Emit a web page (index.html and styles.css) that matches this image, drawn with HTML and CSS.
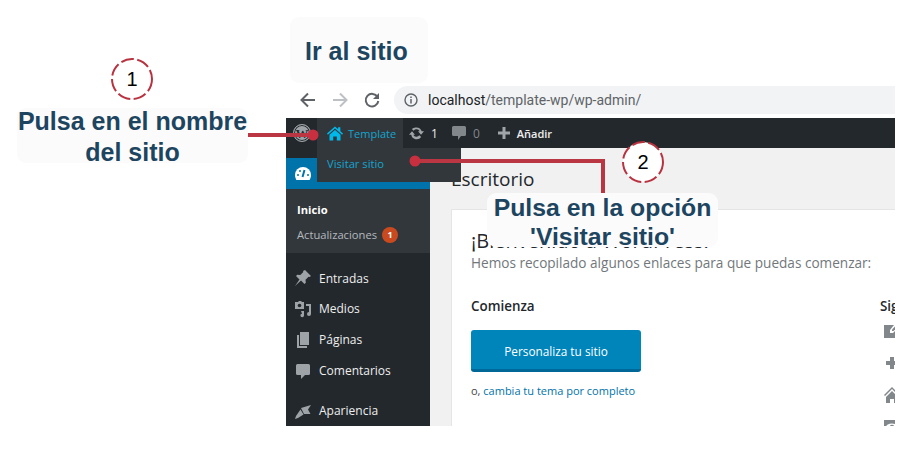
FILE: index.html
```html
<html>
<head><title>Ir al sitio</title>
<meta name="viewport" content="width=device-width, initial-scale=1.0">
<link rel="stylesheet" href="styles.css">
</head>
<body>
<div class="page">
	<div class="shot">
		<!-- browser bar -->
		<div class="browser">
			<svg class="nav" width="20" height="20" viewBox="0 0 20 20"><path d="M17 10H4M10 3.500L3.500 10l6.500 6.500" fill="none" stroke="#5f6368" stroke-width="2"/></svg>
			<svg class="nav" width="20" height="20" viewBox="0 0 20 20"><path d="M3 10h13M10 3.500l6.500 6.500L10 16.500" fill="none" stroke="#bdc1c6" stroke-width="2"/></svg>
			<svg class="nav" width="20" height="20" viewBox="0 0 20 20"><path d="M15.500 7A6.300 6.300 0 1 0 16.300 11" fill="none" stroke="#5f6368" stroke-width="2"/><path d="M17 3v6h-6z" fill="#5f6368"/></svg>
			<div class="url">
				<svg width="14" height="14" viewBox="0 0 14 14"><circle cx="7" cy="7" r="6" fill="none" stroke="#5f6368" stroke-width="1.400"/><path d="M7 6v4.500M7 3.400v1.500" stroke="#5f6368" stroke-width="1.500"/></svg>
				<span class="host">localhost</span><span class="path">/template-wp/wp-admin/</span>
			</div>
		</div>
		<!-- wp admin bar -->
		<div class="adminbar">
			<div class="wplogo"><span>W</span></div>
			<div class="sitename">
				<svg width="16" height="15" viewBox="0 0 18 16"><path d="M9 0L0 8l1 1.300L9 2.300l8 7L18 8l-3-2.600V1h-2.500v2.200z" fill="#00b9eb"/><path d="M9 4L2.800 9.500V16H7v-4.500h4V16h4.200V9.500z" fill="#00b9eb"/></svg>
				<span>Template</span>
			</div>
			<div class="baritem bar-updates">
				<svg width="17" height="14" viewBox="0 0 17 14"><path d="M8.500 1.500a5.500 5.500 0 0 1 5.200 3.800H16l-3 3.500-3-3.500h1.700a3.500 3.500 0 0 0-6-.6L3.800 3A5.500 5.500 0 0 1 8.500 1.500zM4 5.200l3 3.500H5.300a3.500 3.500 0 0 0 6 .6l1.900 1.700a5.500 5.500 0 0 1-9.900-2.300H1z" fill="#a0a5aa"/></svg>
				<span class="count">1</span>
			</div>
			<div class="baritem bar-comments">
				<svg width="16" height="16" viewBox="0 0 16 16"><path d="M2.500 1h11A1.500 1.500 0 0 1 15 2.500v7a1.500 1.500 0 0 1-1.500 1.500H10l-3 4v-4H2.500A1.500 1.500 0 0 1 1 9.500v-7A1.500 1.500 0 0 1 2.500 1z" fill="#82878c"/></svg>
				<span class="count dim">0</span>
			</div>
			<div class="baritem bar-new">
				<svg width="14" height="14" viewBox="0 0 14 14"><path d="M5.500 1h3v4.500H13v3H8.500V13h-3V8.500H1v-3h4.500z" fill="#a0a5aa"/></svg>
				<span class="add">Añadir</span>
			</div>
		</div>
		<div class="dropdown">Visitar sitio</div>

		<div class="wrap">
			<div class="sidebar">
				<div class="menu current">
					<svg width="18" height="18" viewBox="0 0 18 18"><path d="M9 2a8 8 0 0 0-8 8c0 1.800.5 3.500 1.400 5h13.200c.9-1.500 1.400-3.200 1.400-5a8 8 0 0 0-8-8z" fill="#fff"/><path d="M10.500 5L8.500 12" stroke="#0073aa" stroke-width="2"/><circle cx="4" cy="10" r="1" fill="#0073aa"/><circle cx="14" cy="10" r="1" fill="#0073aa"/><circle cx="6" cy="6" r="1" fill="#0073aa"/></svg>
				</div>
				<div class="submenu">
					<div class="subitem active">Inicio</div>
					<div class="subitem">Actualizaciones <span class="badge">1</span></div>
				</div>
				<div class="menu first">
					<svg width="18" height="18" viewBox="0 0 18 18"><path d="M11 1l6 6-1.500 1-1-.3-3 3 .3 3-1.300 1.300-3.500-3.500L1 17l4.500-6.500L2 7l1.300-1.300 3 .3 3-3L9 2z" fill="#9ea3a8"/></svg>
					<span>Entradas</span>
				</div>
				<div class="menu">
					<svg width="18" height="18" viewBox="0 0 18 18"><path d="M1 2h3l1-1h2l1 1h2v7H1z" fill="#9ea3a8"/><circle cx="5.500" cy="5.500" r="1.800" fill="#23282d"/><path d="M12 4h5v10a2 2 0 1 1-2-2V6h-3zM7 11h3v4.500a1.800 1.800 0 1 1-2-1.800z" fill="#9ea3a8"/></svg>
					<span>Medios</span>
				</div>
				<div class="menu">
					<svg width="18" height="18" viewBox="0 0 18 18"><path d="M6 1h9v13H6z" fill="#9ea3a8"/><path d="M3 4h2v11h8v2H3z" fill="#9ea3a8"/></svg>
					<span>Páginas</span>
				</div>
				<div class="menu">
					<svg width="18" height="18" viewBox="0 0 18 18"><path d="M3.500 2h11A1.500 1.500 0 0 1 16 3.500v8a1.500 1.500 0 0 1-1.500 1.500H11l-4 4v-4H3.500A1.500 1.500 0 0 1 2 11.500v-8A1.500 1.500 0 0 1 3.500 2z" fill="#9ea3a8"/></svg>
					<span>Comentarios</span>
				</div>
				<div class="menu last">
					<svg width="18" height="18" viewBox="0 0 18 18"><path d="M7 6L17 3l-3 4.500L16.500 12H10z" fill="#9ea3a8"/><path d="M6.500 7.500L9.500 12.500 4 16l-3 1 1-3z" fill="#9ea3a8"/></svg>
					<span>Apariencia</span>
				</div>
			</div>
			<div class="main">
				<h1>Escritorio</h1>
				<div class="panel">
					<h2>¡Bienvenido a WordPress!</h2>
					<p class="about">Hemos recopilado algunos enlaces para que puedas comenzar:</p>
					<div class="cols">
						<div class="col-start">
							<h3>Comienza</h3>
							<div class="button">Personaliza tu sitio</div>
							<p class="theme">o, <span class="link">cambia tu tema por completo</span></p>
						</div>
						<div class="col-next">
							<h3>Siguientes pasos</h3>
							<div class="step"><svg width="18" height="18" viewBox="0 0 18 18"><path d="M1 3h10L7 8v3h3l4-4v9H1z" fill="#82878c"/><path d="M9 7.500L15 1.500l1.500 1.500-6 6H9z" fill="#82878c"/></svg></div>
							<div class="step"><svg width="18" height="18" viewBox="0 0 18 18"><path d="M7 3h4v4h4v4h-4v4H7v-4H3V7h4z" fill="#82878c"/></svg></div>
							<div class="step"><svg width="18" height="18" viewBox="0 0 18 18"><path d="M9 1L1 9l1 1 7-7 7 7 1-1zM9 5l-6 6v6h4v-4h4v4h4v-6z" fill="#82878c"/></svg></div>
							<div class="step"><svg width="18" height="18" viewBox="0 0 18 18"><path d="M1 2h16v14H1z" fill="#82878c"/><ellipse cx="9" cy="9" rx="6" ry="3.500" fill="#fff"/><circle cx="9" cy="9" r="2.200" fill="#82878c"/></svg></div>
						</div>
					</div>
				</div>
			</div>
		</div>
	</div>

	<!-- annotations on top of the screenshot -->
	<div class="note note-title">Ir al sitio</div>
	<div class="note note-one"><div class="note-text">Pulsa en el nombre<br>del sitio</div></div>
	<svg class="marks" width="911" height="450" viewBox="0 0 911 450">
		<path d="M248 135H313" fill="none" stroke="#bb3643" stroke-width="4"/>
		<circle cx="313" cy="135" r="5.500" fill="#c9303f"/>
		<path d="M415 161H603V194" fill="none" stroke="#bb3643" stroke-width="4"/>
		<circle cx="415" cy="161" r="5.500" fill="#c9303f"/>
		<circle class="ring" cx="132" cy="79" r="20"/>
		<circle class="ring" cx="643" cy="162" r="20"/>
	</svg>
	<div class="num num-one">1</div>
	<div class="num num-two">2</div>
	<div class="note note-two">Pulsa en la opción<br>'Visitar sitio'</div>
</div>
</body>
</html>
```

FILE: styles.css
```css
body {margin: 0; background: #fff; overflow: hidden}
.page
{
	position: relative;
	width: 911px;
	height: 450px;
	padding: 86px 0 0 286px;
	box-sizing: border-box;
	font-family: "Open Sans", sans-serif;
}
.shot
{
	position: relative;
	width: 609px;
	height: 340px;
	overflow: hidden;
}

/* browser bar */
.browser
{
	display: flex;
	align-items: flex-start;
	height: 32px;
	padding-left: 12px;
}
.nav
{
	margin: 4px 12px 0 0;
}
.url
{
	display: flex;
	align-items: center;
	flex: 1;
	height: 28px;
	padding-left: 10px;
	background: #f1f3f4;
	border-radius: 14px 0 0 14px;
	font-family: Roboto, sans-serif;
	font-size: 14px;
}
.url svg
{
	margin-right: 10px;
}
.host
{
	color: #202124;
}
.path
{
	color: #5f6368;
}

/* admin bar */
.adminbar
{
	display: flex;
	align-items: center;
	height: 30px;
	background: #23282d;
	font-size: 11px;
}
.wplogo
{
	display: flex;
	justify-content: center;
	align-items: center;
	width: 18px;
	height: 18px;
	margin: 0 6px 0 7px;
	box-sizing: border-box;
	border: 1px solid #9ea3a8;
	border-radius: 50%;
	background: #9ea3a8;
	box-shadow: inset 0 0 0 1px #23282d;
	color: #23282d;
	font-family: "Liberation Serif", serif;
	font-size: 13px;
	font-weight: bold;
	line-height: 1;
}
.sitename
{
	display: flex;
	align-items: center;
	gap: 5px;
	width: 86px;
	height: 30px;
	padding-left: 10px;
	box-sizing: border-box;
	background: #32373c;
	color: #14a5cf;
}
.baritem
{
	display: flex;
	align-items: center;
	gap: 6px;
	margin-right: 4px;
	color: #eee;
}
.bar-updates
{
	margin-left: 5px;
}
.bar-comments
{
	margin-left: 9px;
}
.bar-new
{
	margin-left: 13px;
}
.count
{
	font-size: 12px;
}
.dim
{
	color: #82878c;
}
.add
{
	font-weight: 600;
}
.dropdown
{
	position: absolute;
	left: 31px;
	top: 62px;
	width: 144px;
	height: 34px;
	padding: 7px 0 0 10px;
	box-sizing: border-box;
	background: #32373c;
	color: #14a5cf;
	font-size: 11.200px;
	line-height: 18px;
}

/* sidebar */
.wrap
{
	display: flex;
	height: 278px;
}
.sidebar
{
	width: 144px;
	padding-top: 10px;
	box-sizing: border-box;
	background: #23282d;
	color: #eee;
	font-size: 12px;
}
.menu
{
	display: flex;
	align-items: center;
	gap: 7px;
	height: 31px;
	padding-left: 8px;
}
.current
{
	background: #0073aa;
}
.first
{
	height: 30px;
	margin-top: 10px;
}
.last
{
	margin-top: 9px;
}
.submenu
{
	height: 64px;
	padding-top: 8px;
	box-sizing: border-box;
	background: #32373c;
	font-size: 11.200px;
}
.subitem
{
	display: flex;
	align-items: center;
	gap: 5px;
	height: 25px;
	padding-left: 11px;
	color: #b4b9be;
}
.active
{
	color: #fff;
	font-weight: 700;
}
.badge
{
	width: 16px;
	height: 16px;
	border-radius: 50%;
	background: #ca4a1f;
	color: #fff;
	font-size: 9px;
	font-weight: 700;
	line-height: 16px;
	text-align: center;
}

/* main area */
.main
{
	flex: 1;
	padding: 18px 0 0 21px;
	background: #f1f1f1;
	min-width: 0;
}
h1
{
	margin: 0 0 17px;
	color: #23282d;
	font-size: 19px;
	font-weight: 400;
	line-height: 26px;
}
.panel
{
	height: 240px;
	padding: 20px 0 0 19px;
	border: 1px solid #e5e5e5;
	border-right: 0;
	background: #fff;
}
h2
{
	margin: 0 0 3px;
	color: #23282d;
	font-size: 20px;
	font-weight: 400;
	line-height: 21px;
	white-space: nowrap;
}
.about
{
	margin: 0 0 25px;
	color: #72777c;
	font-size: 13.600px;
	line-height: 18px;
	white-space: nowrap;
}
.cols
{
	display: flex;
}
.col-start
{
	flex: none;
	width: 409px;
}
.col-next
{
	flex: none;
	width: 200px;
}
h3
{
	margin: 0;
	color: #23282d;
	font-size: 13.400px;
	font-weight: 600;
	line-height: 18px;
	white-space: nowrap;
}
.button
{
	width: 170px;
	height: 42px;
	margin-top: 15px;
	box-sizing: border-box;
	border-bottom: 3px solid #006799;
	border-radius: 3px;
	background: #0085ba;
	color: #fff;
	font-size: 11.800px;
	line-height: 42px;
	text-align: center;
}
.theme
{
	margin: 11px 0 0;
	color: #444;
	font-size: 11px;
	line-height: 16px;
	white-space: nowrap;
}
.link
{
	color: #0073aa;
}
.step
{
	display: flex;
	align-items: center;
	height: 32px;
	padding-left: 3px;
}

/* annotations */
.note
{
	position: absolute;
	box-sizing: border-box;
	border-radius: 9px;
	background: #fbfbfc;
	color: #1d4560;
	font-family: "Liberation Sans", Arial, sans-serif;
	font-size: 25px;
	font-weight: bold;
	line-height: 31px;
	text-align: center;
	white-space: nowrap;
}
.note-title
{
	left: 290px;
	top: 17px;
	width: 138px;
	height: 66px;
	padding: 19px 21px 0 15px;
	text-align: left;
}
.note-one
{
	left: 17px;
	top: 108px;
	width: 231px;
	height: 55px;
}
.note-text
{
	margin-top: -2px;
}
.note-two
{
	left: 487px;
	top: 193px;
	width: 231px;
	height: 54px;
	font-size: 24.800px;
	line-height: 29px;
}
.marks
{
	position: absolute;
	left: 0;
	top: 0;
}
.ring
{
	fill: #fff;
	stroke: #b8323f;
	stroke-width: 2;
	stroke-dasharray: 13 3.500;
}
.num
{
	position: absolute;
	width: 40px;
	color: #000;
	font-family: "Liberation Sans", Arial, sans-serif;
	font-size: 20px;
	line-height: 24px;
	text-align: center;
}
.num-one
{
	left: 112px;
	top: 67px;
}
.num-two
{
	left: 623px;
	top: 150px;
}
```
